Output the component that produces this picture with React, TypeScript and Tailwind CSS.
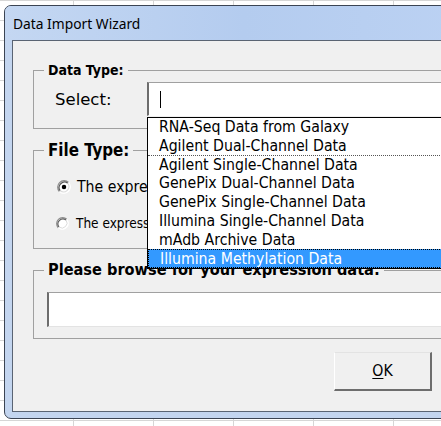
import React from 'react'

const ui = "font-['DejaVu_Sans_Condensed','DejaVu_Sans',sans-serif]"

const items = [
  'RNA-Seq Data from Galaxy',
  'Agilent Dual-Channel Data',
  'Agilent Single-Channel Data',
  'GenePix Dual-Channel Data',
  'GenePix Single-Channel Data',
  'Illumina Single-Channel Data',
  'mAdb Archive Data',
  'Illumina Methylation Data',
]

function Radio({ checked, size = 13 }: { checked?: boolean; size?: number }) {
  return (
    <svg width={size} height={size} viewBox="0 0 13 13" className="shrink-0">
      <circle cx="6.5" cy="6.5" r="6" fill="#fff" />
      <path d="M2.26 10.74 A6 6 0 0 1 10.74 2.26" stroke="#8c8c8c" strokeWidth="1.2" fill="none" />
      <path d="M3.0 10.0 A5 5 0 0 1 10.0 3.0" stroke="#5a5a5a" strokeWidth="1.1" fill="none" />
      <path d="M10.74 2.26 A6 6 0 0 1 2.26 10.74" stroke="#ffffff" fill="none" />
      <path d="M10.0 3.0 A5 5 0 0 1 3.0 10.0" stroke="#dcdcdc" fill="none" />
      {checked && <circle cx="6.5" cy="6.5" r="2.1" fill="#000" />}
    </svg>
  )
}

export default function App() {
  return (
    <div className="w-[441px] h-[426px] overflow-hidden bg-white bg-[linear-gradient(to_right,#d6d6d6_1px,transparent_1px),linear-gradient(to_bottom,#d6d6d6_1px,transparent_1px)] bg-[size:80px_20px] bg-[position:73px_0px] pl-[4px] pt-[5px]">
      <div className="w-[480px] h-[414px] rounded-tl-[7px] rounded-bl-[7px] border border-[#3b4453] bg-[#c3d5ef] flex flex-col">
        <div className="h-[34px] shrink-0 flex items-center pl-[8px] pt-[3px] rounded-tl-[6px] bg-gradient-to-r from-[#c4d7f2] via-[#b4ccef] to-[#bcd2f3] text-[13.8px] text-black font-['Noto_Sans',sans-serif]">
          Data Import Wizard
        </div>
        <div className={`ml-[7px] mb-[6px] flex-1 border border-[#5a6473] bg-[#f0f0f0] flex flex-col pl-[20px] text-black ${ui}`}>
          {/* Data Type */}
          <fieldset className="mt-[21px] w-[440px] h-[67px] border border-[#a0a0a0]">
            <legend className="ml-[10px] px-[4px] text-[14px] font-bold leading-[16px]">Data Type:</legend>
            <div className="flex items-center pl-[21px] mt-[4px]">
              <span className="w-[92px] pt-[3px] text-[16.5px] font-['DejaVu_Sans',sans-serif]">Select:</span>
              <div className="relative h-[34px] w-[300px] bg-white border-t border-t-[#a0a0a0] border-l-2 border-l-[#6d6d6d] border-b border-b-white flex items-center">
                <span className="ml-[11px] w-px h-[17px] bg-black" />
                <div className="absolute left-[-2px] top-[34px] z-10 w-[300px] border border-black bg-white">
                  {items.map((it, i) => (
                    <div
                      key={it}
                      className={
                        i === 7
                          ? 'h-[18.75px] pl-[11px] text-[15.7px] leading-[17px] bg-[#3399ff] text-white border border-dotted border-black'
                          : i === 1
                            ? 'h-[18.75px] pl-[11px] text-[15.7px] leading-[18.75px] border-b border-dotted border-[#555]'
                            : 'h-[18.75px] pl-[11px] text-[15.7px] leading-[18.75px]'
                      }
                    >
                      {it}
                    </div>
                  ))}
                </div>
              </div>
            </div>
          </fieldset>

          {/* File Type */}
          <fieldset className="mt-[11px] w-[440px] h-[109px] border border-[#a0a0a0]">
            <legend className="ml-[10px] px-[4px] text-[16.8px] font-bold leading-[20px]">File Type:</legend>
            <div className="mt-[17px] h-[20px] flex items-center gap-[6px] pl-[23px] text-[15.7px]">
              <Radio checked size={14} />
              <span className="whitespace-nowrap">The expression data is in one file</span>
            </div>
            <div className="mt-[16px] h-[20px] flex items-center gap-[7px] pl-[22px] text-[13.5px]">
              <Radio size={13} />
              <span className="whitespace-nowrap">The expression data is in multiple files</span>
            </div>
          </fieldset>

          {/* Browse */}
          <fieldset className="mt-[11px] w-[440px] h-[79px] border border-[#a0a0a0]">
            <legend className="ml-[10px] px-[4px] text-[16.2px] font-bold leading-[20px] whitespace-nowrap">
              Please browse for your expression data:
            </legend>
            <div className="mt-[12px] ml-[13px] h-[35px] w-[400px] bg-white border-t border-t-[#a0a0a0] border-l-2 border-l-[#6d6d6d] border-b border-b-[#e3e3e3]" />
          </fieldset>

          <button className="mt-[13px] ml-[301px] w-[98px] h-[39px] bg-[#f0f0f0] border-t border-l border-t-[#e3e3e3] border-l-white border-b-2 border-r-2 border-b-[#6d6d6d] border-r-[#6d6d6d] text-[15.7px]">
            <span className="underline underline-offset-2">O</span>K
          </button>
        </div>
      </div>
    </div>
  )
}
